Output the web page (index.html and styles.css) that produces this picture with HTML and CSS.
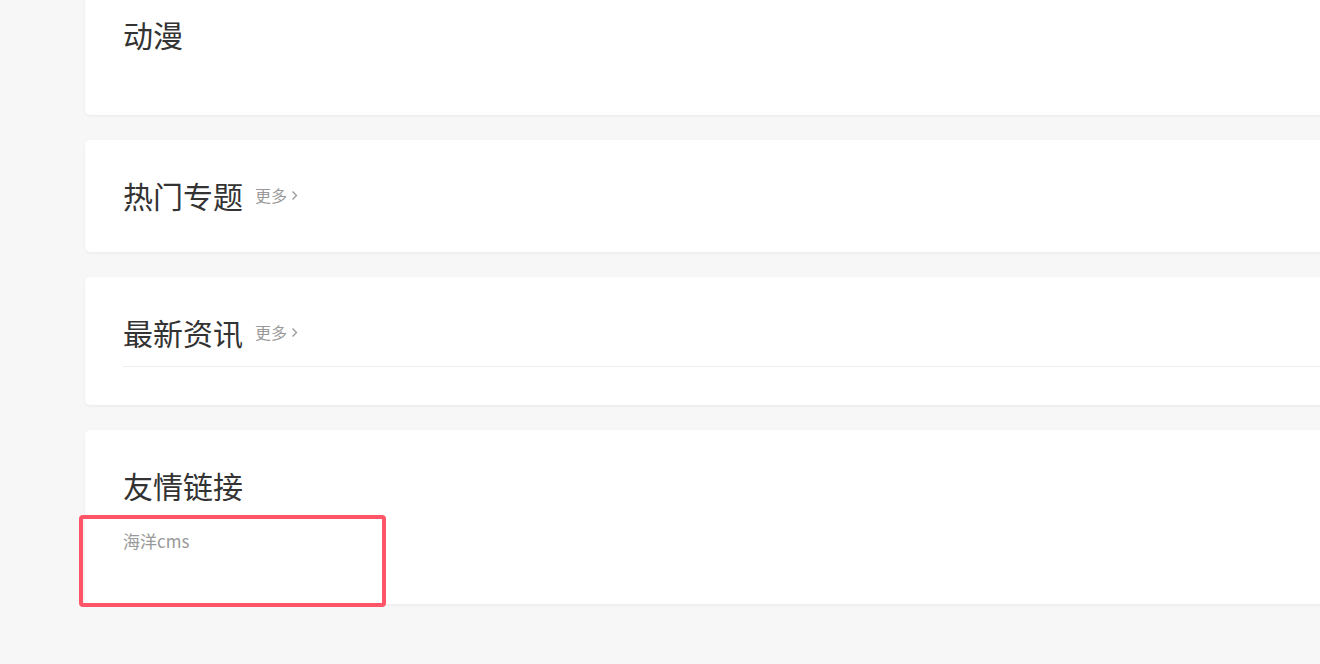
FILE: index.html
```html
<!DOCTYPE html>
<html lang="zh-CN">
  <head>
    <meta charset="utf-8" />
    <meta name="viewport" content="width=device-width, initial-scale=1" />
    <title>首页</title>
    <link rel="stylesheet" href="styles.css">
  </head>
  <body>
    <div class="main">
      <!-- 分类模块 -->
      <div class="box">
        <div class="box-head">
          <h2>动漫</h2>
        </div>
        <ul class="vod-list"></ul>
      </div>

      <div class="box">
        <div class="box-head">
          <h2>热门专题</h2>
          <a class="more" href="#">更多<svg width="7" height="11" viewBox="0 0 7 11"><path d="M1.5 1.5 5.5 5.5 1.5 9.5" fill="none" stroke="currentColor" stroke-width="1.3"/></svg></a>
        </div>
      </div>

      <div class="box">
        <div class="box-head line">
          <h2>最新资讯</h2>
          <a class="more" href="#">更多<svg width="7" height="11" viewBox="0 0 7 11"><path d="M1.5 1.5 5.5 5.5 1.5 9.5" fill="none" stroke="currentColor" stroke-width="1.3"/></svg></a>
        </div>
      </div>

      <div class="box box-links">
        <div class="box-head">
          <h2>友情链接</h2>
        </div>
        <div class="links">
          <a href="#">海洋cms</a>
        </div>
        <!-- 标注框 -->
        <div class="mark"></div>
      </div>
    </div>
  </body>
</html>
```

FILE: styles.css
```css
html, body {
  margin: 0;
  padding: 0;
}

body {
  background-color: #f7f7f7;
  font-family: "Microsoft YaHei", "Noto Sans CJK SC", "Noto Sans", sans-serif;
  color: #333;
  overflow: hidden;
}

a {
  text-decoration: none;
}

.main {
  margin: -21px 0 80px 85px;
  width: 1300px;
  display: flex;
  flex-direction: column;
  gap: 25px;
}

.box {
  position: relative;
  background-color: #fff;
  border-radius: 5px;
  box-shadow: 0 1px 3px rgba(0, 0, 0, 0.06);
  padding: 38px 38px 38px;
}

.box-head {
  display: flex;
  align-items: flex-start;
  gap: 12px;
  height: 36px;
}

.box-head.line {
  padding-bottom: 15px;
  border-bottom: 1px solid #eee;
}

.box-head h2 {
  margin: 0;
  font-size: 30px;
  font-weight: normal;
  line-height: 34px;
  color: #333;
}

.more {
  display: flex;
  align-items: center;
  gap: 4px;
  height: 34px;
  font-size: 16px;
  color: #999;
}

.vod-list {
  list-style: none;
  margin: 0;
  padding: 0;
  height: 24px;
}

.links {
  padding-top: 25px;
  margin-bottom: 13px;
  line-height: 24px;
  font-size: 17px;
}

.links a {
  color: #999;
}

.mark {
  position: absolute;
  left: -6px;
  top: 85px;
  width: 299px;
  height: 84px;
  border: 4px solid #ff5566;
  border-radius: 4px;
}
```
